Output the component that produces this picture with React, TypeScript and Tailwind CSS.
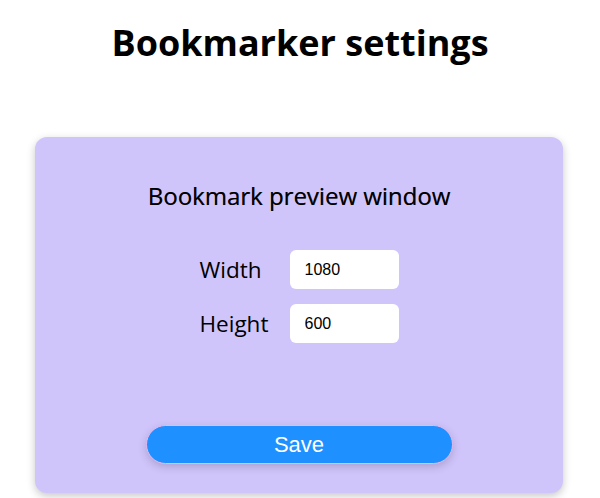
export default function App() {
  return (
    <div className="flex min-h-[498px] flex-col items-center bg-white font-['Open_Sans',sans-serif] text-black">
      <h1 className="mt-[17px] text-[36px] font-bold leading-[52px]">Bookmarker settings</h1>

      <div className="mt-[68px] mr-[2px] flex w-[528px] flex-col items-center rounded-xl bg-[#d0c5fb] pt-[43px] pb-[29px] shadow-[0_3px_8px_rgba(0,0,0,0.22)]">
        <h2 className="text-[24px] leading-[32px] [text-shadow:0.4px_0_0_rgba(0,0,0,0.6)]">Bookmark preview window</h2>

        <div className="mt-[38px] grid grid-cols-[90px_109px] gap-y-[15px]">
          <label className="self-center text-[22.5px] leading-[28px]">Width</label>
          <input
            defaultValue="1080"
            className="h-[39px] rounded-md bg-white px-[15px] font-['Liberation_Sans',sans-serif] text-[16px] outline-none"
          />
          <label className="self-center text-[22.5px] leading-[28px]">Height</label>
          <input
            defaultValue="600"
            className="h-[39px] rounded-md bg-white px-[15px] font-['Liberation_Sans',sans-serif] text-[16px] outline-none"
          />
        </div>

        <button className="mt-[82px] h-[39px] w-[307px] rounded-full border border-[#e6b8f0] bg-[#1e90ff] font-['Liberation_Sans',sans-serif] text-[22px] text-white shadow-[0_3px_8px_rgba(0,0,0,0.18)]">
          Save
        </button>
      </div>
    </div>
  );
}
